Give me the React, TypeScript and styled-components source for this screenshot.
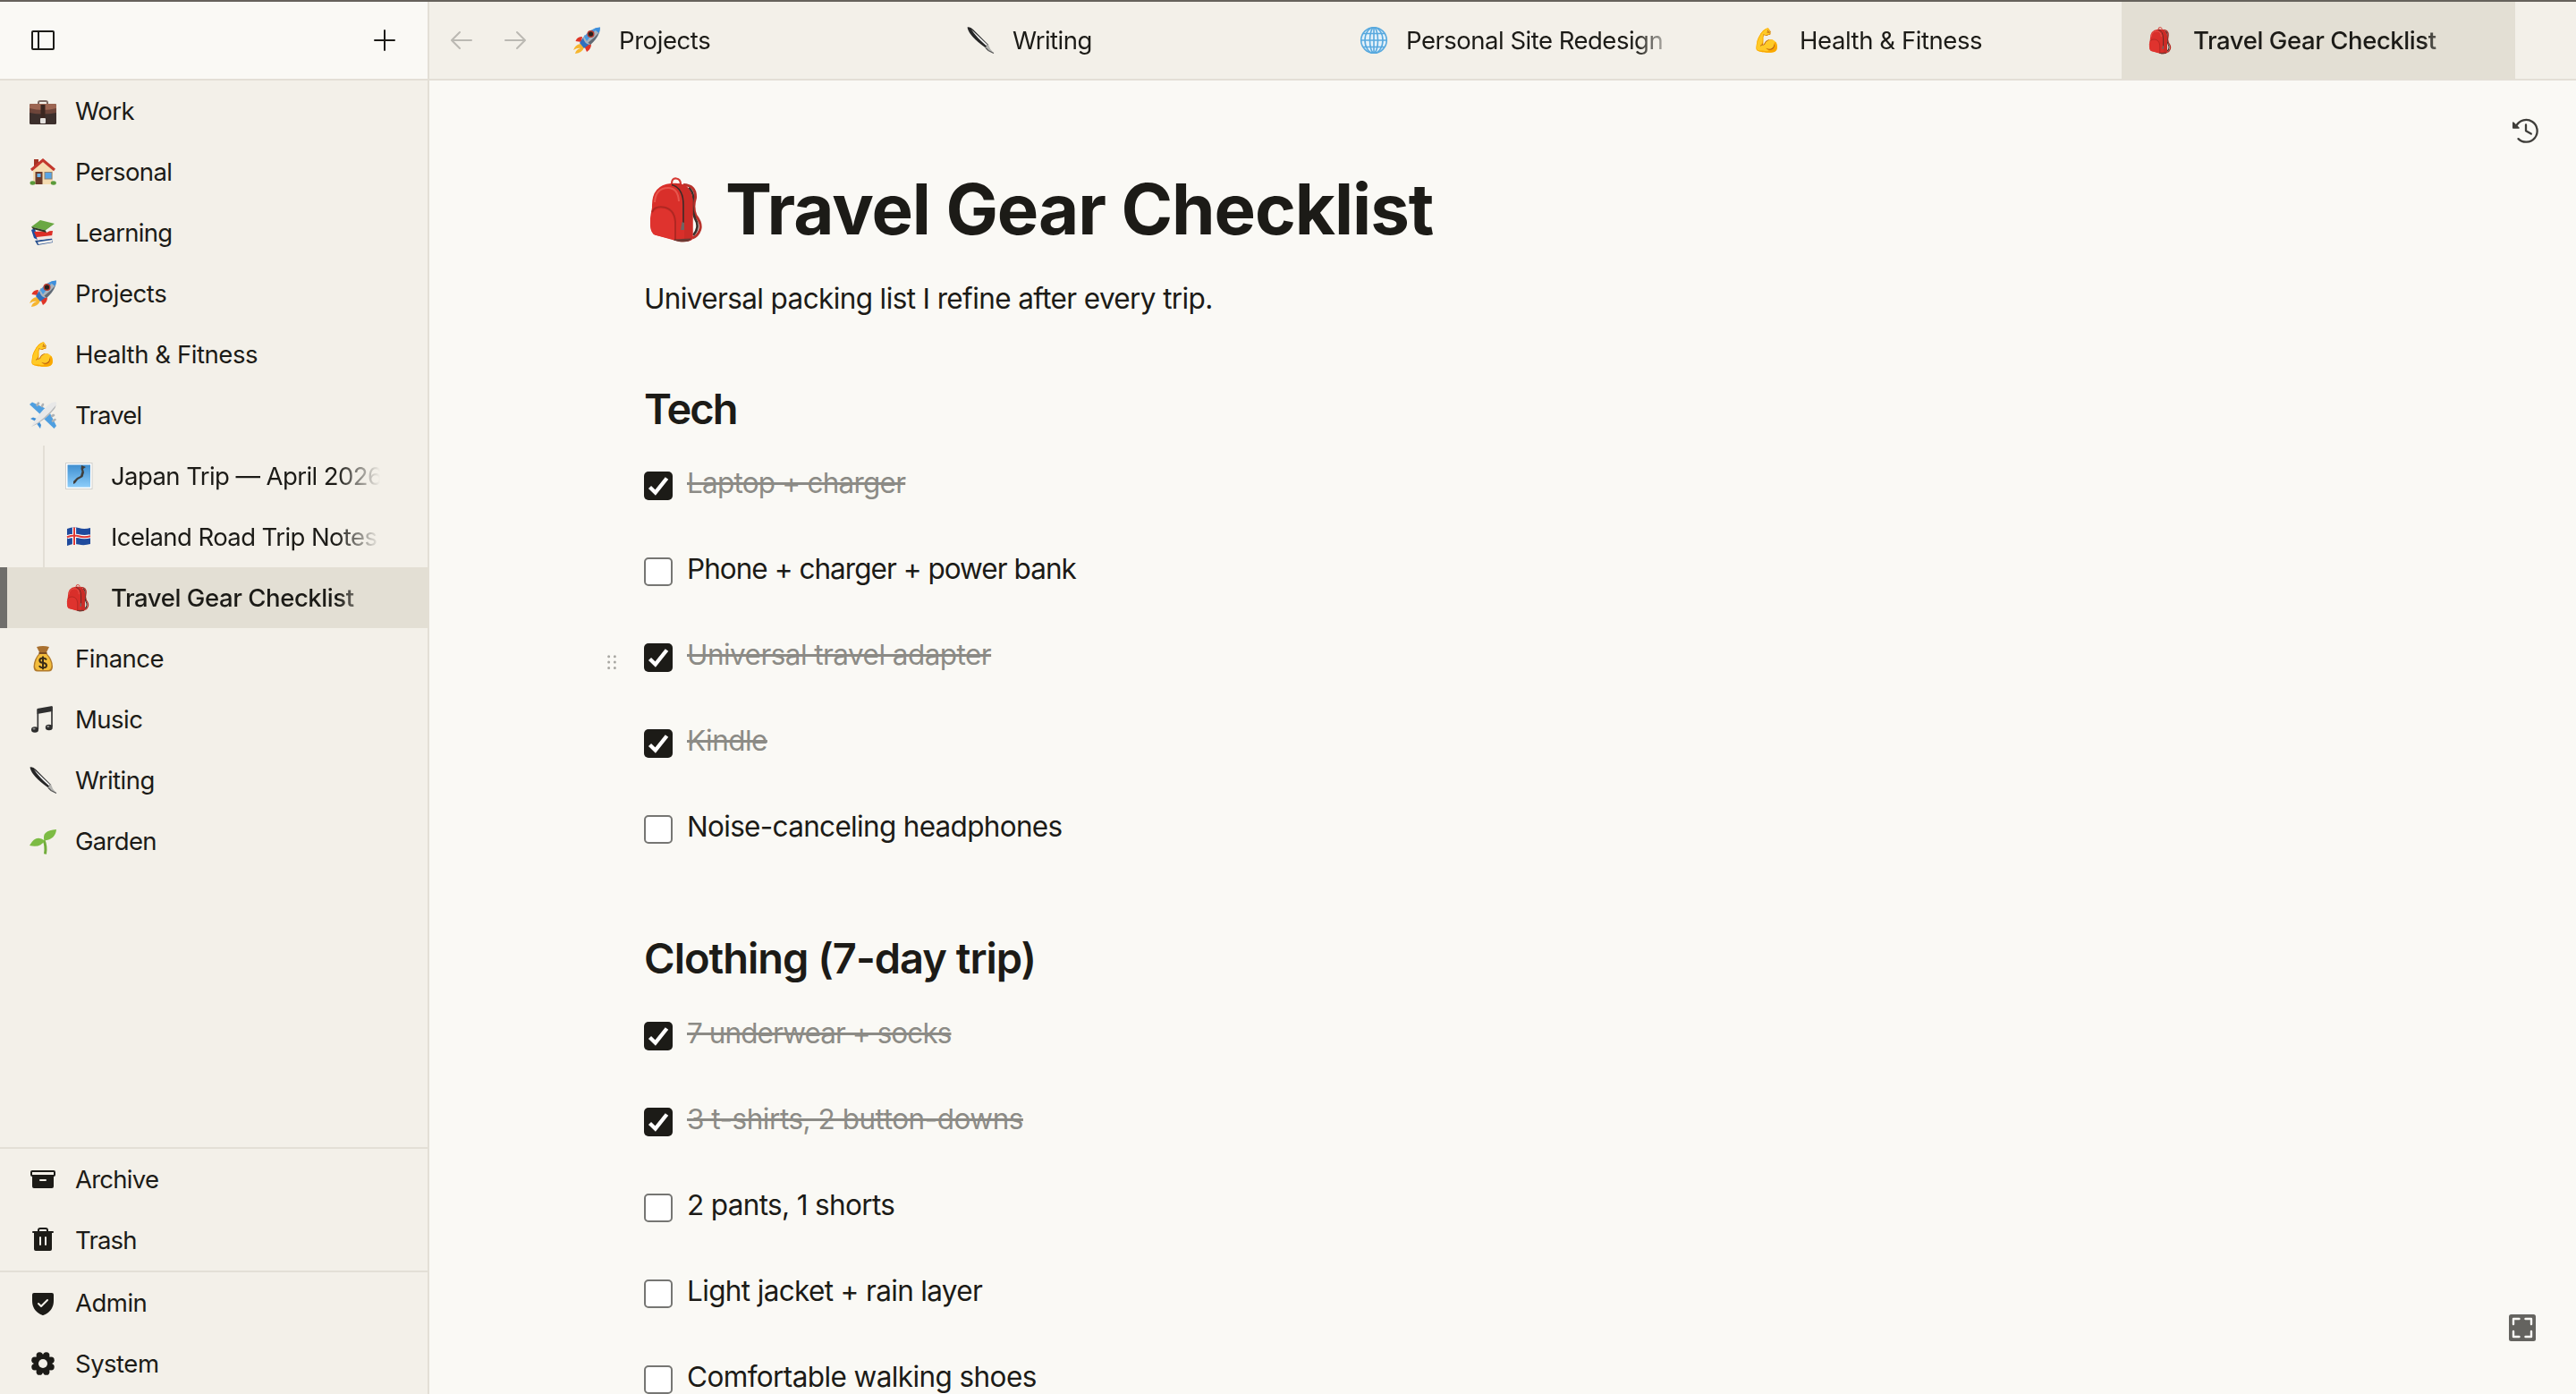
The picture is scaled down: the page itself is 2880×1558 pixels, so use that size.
import React from "react";
import styled, { createGlobalStyle, css } from "styled-components";
import {
  PiArchiveFill,
  PiArrowLeft,
  PiArrowRight,
  PiDotsSixVerticalBold,
  PiPlus,
  PiShieldCheckFill,
  PiSidebarSimple,
  PiTrashFill,
} from "react-icons/pi";

const color = {
  page: "#faf9f5",
  panel: "#f3f0e9",
  active: "#e3dfd4",
  line: "#e3dfd6",
  ink: "#1c1b17",
  done: "#8c8b86",
};

const GlobalStyle = createGlobalStyle`
  *, *::before, *::after { box-sizing: border-box; }
  html, body { margin: 0; padding: 0; height: 100%; overflow: hidden; }
  body {
    background: ${color.page};
    color: ${color.ink};
    font-family: Inter, "Liberation Sans", sans-serif;
    font-size: 27.5px;
  }
`;

/* ---------- layout ---------- */

const Shell = styled.div`
  display: grid;
  grid-template-columns: 480px 1fr;
  height: 1558px;
  width: 2880px;
  overflow: hidden;
  border-top: 2px solid #66625c;
`;

const Sidebar = styled.aside`
  display: flex;
  flex-direction: column;
  min-height: 0;
  background: ${color.panel};
  border-right: 2px solid ${color.line};
`;

const SidebarHeader = styled.div`
  display: flex;
  align-items: center;
  justify-content: space-between;
  flex: none;
  height: 88px;
  padding: 0 32px;
  background: ${color.page};
  border-bottom: 2px solid ${color.line};
`;

const IconButton = styled.button<{ $muted?: boolean }>`
  display: flex;
  padding: 0;
  border: 0;
  background: none;
  font-size: 32px;
  color: ${(p) => (p.$muted ? "#bbb9b3" : color.ink)};
`;

const Tree = styled.nav`
  display: flex;
  flex-direction: column;
  flex: 1;
`;

const NavRow = styled.a<{ $child?: boolean; $active?: boolean }>`
  display: flex;
  align-items: center;
  gap: 20px;
  height: 68px;
  flex: none;
  padding-left: ${(p) => (p.$child ? 72 : 32)}px;
  padding-right: 53px;
  ${(p) =>
    p.$child &&
    !p.$active &&
    css`
      background: linear-gradient(${color.line}, ${color.line}) 48px 0 / 2px 100% no-repeat;
    `}
  ${(p) =>
    p.$active &&
    css`
      margin-right: -2px;
      padding-left: 64px;
      padding-right: 55px;
      border-left: 8px solid #6f6e6b;
      background: ${color.active};
      font-weight: 500;
    `}
`;

const Label = styled.span<{ $track?: number; $fade?: boolean }>`
  flex: 1;
  min-width: 0;
  overflow: hidden;
  white-space: nowrap;
  line-height: 40px;
  letter-spacing: ${(p) => p.$track ?? -0.5}px;
  ${(p) =>
    p.$fade &&
    css`
      mask-image: linear-gradient(to right, #000 calc(100% - 48px), transparent);
    `}
`;

const Footer = styled.div`
  display: flex;
  flex-direction: column;
  border-top: 2px solid ${color.line};
`;

const Glyph = styled.span<{ $size?: number }>`
  display: flex;
  align-items: center;
  justify-content: center;
  flex: none;
  width: ${(p) => p.$size ?? 32}px;
  height: ${(p) => p.$size ?? 32}px;
  font-size: 32px;
  svg {
    display: block;
  }
`;

const EmojiText = styled.span`
  font-family: "Noto Color Emoji", sans-serif;
  font-size: 26px;
  font-weight: 400;
  line-height: 32px;
`;

const Workspace = styled.div`
  display: flex;
  flex-direction: column;
  min-width: 0;
  min-height: 0;
`;

const TabBar = styled.div`
  display: flex;
  flex: none;
  height: 88px;
  background: ${color.panel};
  border-bottom: 2px solid ${color.line};
`;

const History = styled.div`
  display: flex;
  align-items: center;
  gap: 28px;
  width: 132px;
  padding-left: 20px;
`;

const Tab = styled.div<{ $active?: boolean }>`
  display: flex;
  align-items: center;
  gap: 20px;
  flex: none;
  width: 440px;
  padding: 0 56px 0 28px;
  background: ${(p) => (p.$active ? color.active : "transparent")};
  font-weight: ${(p) => (p.$active ? 500 : 400)};
`;

const Page = styled.main`
  position: relative;
  flex: 1;
  min-height: 0;
  overflow: hidden;
  padding: 96px 240px 0;
`;

const PageAction = styled.button`
  position: absolute;
  display: flex;
  top: 40px;
  right: 41px;
  padding: 0;
  border: 0;
  background: none;
`;

const ExpandAction = styled.button`
  position: absolute;
  display: flex;
  right: 45px;
  bottom: 59px;
  padding: 0;
  border: 0;
  background: none;
`;

const TitleRow = styled.div`
  display: flex;
  align-items: center;
  gap: 15px;
  height: 96px;
`;

const Title = styled.h1`
  margin: 0;
  font-size: 78px;
  font-weight: 700;
  line-height: 96px;
  letter-spacing: -1.05px;
`;

const Lead = styled.p`
  margin: 28px 0 70px;
  font-size: 31.5px;
  line-height: 48px;
  letter-spacing: -0.62px;
`;

const Section = styled.section`
  margin-bottom: 47px;
`;

const Heading = styled.h2<{ $track: number }>`
  margin: 0 0 29.4px;
  font-size: 47px;
  font-weight: 600;
  line-height: 58px;
  letter-spacing: ${(p) => p.$track}px;
`;

const Item = styled.div`
  position: relative;
  display: flex;
  align-items: flex-start;
  gap: 16px;
  height: 96px;
`;

const Box = styled.span<{ $checked?: boolean }>`
  display: block;
  flex: none;
  width: 32px;
  height: 32px;
  margin-top: 12px;
  border-radius: 5px;
  border: ${(p) => (p.$checked ? "0" : "2px solid #767673")};
  background: ${(p) => (p.$checked ? color.ink : "#fff")};
`;

const ItemText = styled.span<{ $checked?: boolean; $track?: number }>`
  font-size: 31.5px;
  line-height: 50px;
  white-space: nowrap;
  letter-spacing: ${(p) => p.$track ?? -0.55}px;
  ${(p) =>
    p.$checked &&
    css`
      color: ${color.done};
      text-decoration: line-through;
      text-decoration-thickness: 3px;
    `}
`;

const DragHandle = styled.span`
  position: absolute;
  display: flex;
  left: -48px;
  top: 21px;
  font-size: 24px;
  color: #a9a8a3;
`;

/* ---------- pictograms ---------- */

const Briefcase = () => (
  <svg width="32" height="32" viewBox="0 0 32 32">
    <path d="M11 8V6.500Q11 5 13 5H19Q21 5 21 6.500V8" fill="none" stroke="#7d6a64" strokeWidth="2" />
    <rect x="1" y="8" width="30" height="23" rx="1.500" fill="#3c2f2c" />
    <path d="M2.500 8H29.500Q31 8 31 10V17Q16 20 1 17V10Q1 8 2.500 8Z" fill="#9c6552" />
    <path d="M1 13Q16 17 31 13V18Q16 21 1 18Z" fill="#6d453a" />
    <rect x="13.500" y="9" width="5" height="16" fill="#3b2620" />
    <rect x="13" y="24" width="6" height="6" rx="1" fill="#e4e1de" />
  </svg>
);

const House = () => (
  <svg width="32" height="32" viewBox="0 0 32 32">
    <rect x="6" y="2" width="5" height="9" fill="#a33325" />
    <path d="M5 14L16 4L27 14V30H5Z" fill="#f5dcb2" />
    <path d="M3 14L16 3L29 14" fill="none" stroke="#c3372d" strokeWidth="3" />
    <rect x="7.500" y="16" width="8" height="14" fill="#6b3a2a" />
    <rect x="9.500" y="18" width="4" height="4" fill="#6cb6ef" />
    <rect x="18" y="16.500" width="8" height="7.500" fill="#57a5e6" stroke="#8b8174" strokeWidth="1" />
    <ellipse cx="4.500" cy="28.500" rx="3" ry="2.200" fill="#5a9a3a" />
    <ellipse cx="27.800" cy="28.500" rx="3" ry="2.200" fill="#5a9a3a" />
  </svg>
);

const Books = () => (
  <svg width="32" height="32" viewBox="0 0 32 32">
    <path d="M7 25L26 22L27 27L10 30Z" fill="#27508f" />
    <path d="M10 26.500L26.500 24V26.500L11 29Z" fill="#f1efec" />
    <path d="M3 13L7 11L10 24L6 22Z" fill="#1c4da0" />
    <path d="M6 15L27 14L26 20L9 22Z" fill="#dd2e26" />
    <path d="M9 21L27 19V22.500L10 24.500Z" fill="#f3e6e2" />
    <path d="M3 9.500L13 2L29 6L19 13.500Z" fill="#6aa843" />
    <path d="M3 9.500L19 13.500L20 16L5 12Z" fill="#2d3a26" />
    <path d="M19 13.500L29 6.500V11L20 16Z" fill="#f0f0ee" />
  </svg>
);

const Rocket = () => (
  <svg width="32" height="32" viewBox="0 0 32 32">
    <path d="M9 20Q3 21 1 27Q6 24 9 25Q4 26 3 31Q11 30 13 24Z" fill="#f6b52f" />
    <path d="M11 12Q5 12 3.500 17L10 18Z" fill="#df3527" />
    <path d="M21 20Q21 26 16 29L13 22Z" fill="#df3527" />
    <path d="M8 19L14 10L22 18L13 25Z" fill="#2f6fbd" />
    <path d="M12 13Q20 2 31 1.500Q31 12 20 21Q13 20 12 13Z" fill="#a9b4be" />
    <path d="M13 12Q21 3 28 2L16 17Z" fill="#4a9ae0" />
    <path d="M31 1.500Q27 1.500 24 3.300L29.500 8Q31 5 31 1.500Z" fill="#3d8fdd" />
    <path d="M30 7Q27 15 20 21L17.500 18.500Q25 13 30 7Z" fill="#616a74" />
    <circle cx="20.500" cy="9" r="4" fill="#b53a30" />
    <circle cx="20.500" cy="9" r="2.600" fill="#26221f" />
  </svg>
);

const Plane = () => (
  <svg width="32" height="32" viewBox="0 0 32 32">
    <path d="M1 4L4 1.500L22 10L14 16Z" fill="#4f9fe0" />
    <path d="M31 28L28.500 31L17 20L23 12Z" fill="#4f9fe0" />
    <path d="M2 20L5 18.500L12 21L10 24Z" fill="#3f8fd6" />
    <path d="M13 31L14 27L10 20L8 24Z" fill="#3f8fd6" />
    <g stroke="#aeb2b6" strokeWidth="2.600" strokeLinecap="round">
      <path d="M11 2.500L9.500 5M16 4L15 6M29.500 21L27 22.500M28 16L26 17" />
    </g>
    <path d="M3 29Q9 16 22 4.500Q27 .500 31 1.500Q32 5 28 10Q17 23 3 29Z" fill="#e8e8e8" />
    <path d="M3 29Q18 20.500 30.500 5Q30 8 28 10Q17 23 3 29Z" fill="#b4b6b8" />
  </svg>
);

const JapanMap = () => (
  <svg width="32" height="32" viewBox="0 0 32 32">
    <defs>
      <linearGradient id="sea" x1="0" y1="0" x2="0" y2="1">
        <stop offset="0" stopColor="#3f8fd0" />
        <stop offset="1" stopColor="#8ccdfa" />
      </linearGradient>
    </defs>
    <rect x="1.500" y="1.500" width="29.500" height="29" fill="#fff" stroke="#d0d0cd" strokeWidth="1" />
    <rect x="3.500" y="3.500" width="25.500" height="25" fill="url(#sea)" />
    <path
      d="M19 4L24 6L21 8L22 12L20.500 17L15 20L12 24L10 25L10 22L14 18L18 16L19.500 11L18.500 8Z"
      fill="#403f3c"
    />
  </svg>
);

const Iceland = () => (
  <svg width="32" height="32" viewBox="0 0 32 32">
    <path d="M3 7Q10 4 16 6T29 6V24Q22 26 16 24.500T3 26Z" fill="#1f4a9d" />
    <path d="M11 5.500V25M3 16.300Q10 13.500 16 15.300T29 15.300" fill="none" stroke="#fff" strokeWidth="4.200" />
    <path d="M11 5.500V25M3 16.300Q10 13.500 16 15.300T29 15.300" fill="none" stroke="#df3a36" strokeWidth="2" />
  </svg>
);

const MoneyBag = () => (
  <svg width="32" height="32" viewBox="0 0 32 32">
    <path d="M9 3Q16 1 23 3L19.500 10H12.500Z" fill="#a9702f" />
    <path d="M12 10H20Q27 17 27 25Q27 30.500 22 30.500H10Q5.500 30.500 5.500 25Q6 16 12 10Z" fill="#b27a2c" />
    <path d="M12.500 11H19.500Q25 17 25.500 24Q25.500 29 21 29H11.500Q7 29 7 24Q8 16 12.500 11Z" fill="#f3bd3c" />
    <path d="M11.500 10H20.500" stroke="#7c4c20" strokeWidth="2" />
    <path
      d="M20 17.500Q19 15.500 16 15.500Q12.300 15.500 12.300 18Q12.300 20.500 16 20.800Q20 21.200 20 23.700Q20 26.300 16 26.300Q12.800 26.300 12 24M16 13.500V28.300"
      fill="none"
      stroke="#3a2c17"
      strokeWidth="2"
    />
  </svg>
);

const Notes = () => (
  <svg width="32" height="32" viewBox="0 0 32 32">
    <path d="M9.500 4L26.500 1V7L9.500 10Z" fill="#2f2f2f" />
    <path d="M10.300 5V27M26 2V24" stroke="#383838" strokeWidth="1.700" />
    <ellipse cx="7" cy="27.500" rx="4" ry="3.200" fill="#2d2d2d" />
    <ellipse cx="22.800" cy="25" rx="4" ry="3.200" fill="#2d2d2d" />
    <ellipse cx="6" cy="26.500" rx="1.600" ry="1" fill="#8d8d8d" />
    <ellipse cx="21.800" cy="24" rx="1.600" ry="1" fill="#8d8d8d" />
  </svg>
);

const Pen = () => (
  <svg width="32" height="32" viewBox="0 0 32 32">
    <path d="M1.500 1.500Q4.500 .500 8 4L25 21L22 24.500Q3 11 1.500 1.500Z" fill="#252525" />
    <path d="M6 4L24 21L22.800 22.300Q11 12 6 4Z" fill="#f3f3f3" />
    <path d="M21.500 24L25 20.500L27 25.500L31 30.500L25 27.500Z" fill="#b4b4b1" />
    <path d="M22 24.500L25 27.500L31 30.500" fill="none" stroke="#555" strokeWidth="1.200" />
  </svg>
);

const Sprout = () => (
  <svg width="32" height="32" viewBox="0 0 32 32">
    <path d="M17 15Q20 22 18.500 30.500" fill="none" stroke="#72ad3c" strokeWidth="3" />
    <path d="M17.500 15.500Q14 4 31 3Q30 14 17.500 15.500Z" fill="#7cbb43" />
    <path d="M18 15.500Q8 8 1 21Q13 24 18 15.500Z" fill="#7cbb43" />
  </svg>
);

const GlobeIcon = () => (
  <svg width="32" height="32" viewBox="0 0 32 32">
    <circle cx="16" cy="16" r="14.500" fill="#e3f1fa" />
    <g fill="none" stroke="#58a9de" strokeWidth="1.600">
      <circle cx="16" cy="16" r="14.300" />
      <ellipse cx="16" cy="16" rx="10" ry="14.300" />
      <ellipse cx="16" cy="16" rx="4.500" ry="14.300" />
      <path d="M16 1.700V30.300M1.700 16H30.300M4 8.500H28M4 23.500H28" />
    </g>
  </svg>
);

const Backpack = ({ size = 32 }: { size?: number }) => (
  <svg width={size} height={size} viewBox="0 0 76 76">
    <path
      d="M44 10.500Q58 11 57.500 25Q54 36 58 45Q65 54 62.500 61Q60 68 54 70"
      fill="none"
      stroke="#b8322b"
      strokeWidth="3"
    />
    <path d="M50 14Q57 20 54 30Q53.500 40 57 48Q63 58 55 67" fill="none" stroke="#3a302b" strokeWidth="2.600" />
    <path d="M31 9Q31 3 36 3.500Q41 4 41 10" fill="none" stroke="#d63a33" strokeWidth="2.200" />
    <path
      d="M9 36Q8 11 30 9Q52 6 54.500 27L54.500 70Q52 75.500 39 74L12 66.500Q7 64 7 53Q7 44 9 36Z"
      fill="#d92f2a"
    />
    <path d="M30 9.500Q45 12 45 32V73Q54 74 54.500 70V27Q52 6 30 9.500Z" fill="#cb2c27" />
    <path d="M12 30Q13 14 27 14Q38 14 39 29" fill="none" stroke="#e8564d" strokeWidth="2" />
    <path d="M31 10.500Q44 14 44 33V55" fill="none" stroke="#3b2a27" strokeWidth="1.600" />
    <path d="M42.500 52L45 53L45 61L41 61Z" fill="#6f6561" />
    <path d="M7 48Q9 38 20 37Q33 38 34 53V72L12 66.500Q7 64 7 53Z" fill="#df332e" />
    <path d="M9 41Q12 34.500 21 35.500Q34 37 35 52V72" fill="none" stroke="#b02722" strokeWidth="2" />
    <path d="M34 71.500L53 70.500Q51 75.500 39 74L33 72.500Z" fill="#6b3a33" />
  </svg>
);

const lobes = [0, 1, 2, 3, 4, 5, 6, 7].map((k) => {
  const a = ((22.5 + 45 * k) * Math.PI) / 180;
  return [16 + 9.9 * Math.cos(a), 16 + 9.9 * Math.sin(a)];
});

const Cog = () => (
  <svg width="32" height="32" viewBox="0 0 32 32">
    <g fill={color.ink}>
      {lobes.map(([x, y]) => (
        <circle key={`${x}-${y}`} cx={x} cy={y} r="3.600" />
      ))}
      <circle cx="16" cy="16" r="10.500" />
    </g>
    <circle cx="16" cy="16" r="5" fill={color.panel} />
  </svg>
);

const Rewind = () => (
  <svg width="32" height="32" viewBox="0 0 32 32" fill="none" stroke="#3f3e3a" strokeLinecap="round" strokeLinejoin="round">
    <path d="M6.300 10.500A12.400 12.400 0 1 1 8.500 25.100" strokeWidth="2.300" />
    <path d="M17 9.500V16.300L22.800 19.600" strokeWidth="2.300" />
    <path d="M2.800 7V13H9Z" fill="#3f3e3a" strokeWidth="1.600" />
  </svg>
);

const Check = () => (
  <svg width="32" height="32" viewBox="0 0 32 32">
    <path d="M6.500 17.500L12.700 23.500L25.500 7.500" fill="none" stroke="#fff" strokeWidth="4.400" />
  </svg>
);

const Expand = () => (
  <svg width="30" height="30" viewBox="0 0 30 30">
    <rect width="30" height="30" rx="2.500" fill="#64635f" />
    <path
      d="M5 11V5H11.500M18.500 5H25V11M25 19V25H18.500M11.500 25H5V19"
      fill="none"
      stroke="#faf9f5"
      strokeWidth="2.400"
      strokeLinecap="round"
      strokeLinejoin="round"
    />
  </svg>
);

/* ---------- data ---------- */

type Entry = {
  icon: React.ReactNode;
  text: string;
  track?: number;
  child?: boolean;
  active?: boolean;
};

const flex = <EmojiText>💪</EmojiText>;

const tree: Entry[] = [
  { icon: <Briefcase />, text: "Work" },
  { icon: <House />, text: "Personal", track: -0.6 },
  { icon: <Books />, text: "Learning", track: -0.7 },
  { icon: <Rocket />, text: "Projects", track: -0.42 },
  { icon: flex, text: "Health & Fitness", track: -0.42 },
  { icon: <Plane />, text: "Travel", track: -0.8 },
  { icon: <JapanMap />, text: "Japan Trip — April 2026", track: -0.58, child: true },
  { icon: <Iceland />, text: "Iceland Road Trip Notes", track: -0.58, child: true },
  { icon: <Backpack />, text: "Travel Gear Checklist", track: -0.42, child: true, active: true },
  { icon: <MoneyBag />, text: "Finance" },
  { icon: <Notes />, text: "Music" },
  { icon: <Pen />, text: "Writing" },
  { icon: <Sprout />, text: "Garden", track: -0.7 },
];

const storage: Entry[] = [
  { icon: <PiArchiveFill />, text: "Archive", track: -0.75 },
  { icon: <PiTrashFill />, text: "Trash", track: -0.8 },
];

const settings: Entry[] = [
  { icon: <PiShieldCheckFill />, text: "Admin" },
  { icon: <Cog />, text: "System" },
];

const tabs: Entry[] = [
  { icon: <Rocket />, text: "Projects", track: -0.42 },
  { icon: <Pen />, text: "Writing" },
  { icon: <GlobeIcon />, text: "Personal Site Redesign" },
  { icon: flex, text: "Health & Fitness", track: -0.42 },
  { icon: <Backpack />, text: "Travel Gear Checklist", track: -0.42, active: true },
];

type Todo = { text: string; done?: boolean; track?: number; handle?: boolean };

const sections: { title: string; track: number; items: Todo[] }[] = [
  {
    title: "Tech",
    track: -1.9,
    items: [
      { text: "Laptop + charger", done: true, track: -0.78 },
      { text: "Phone + charger + power bank", track: -0.97 },
      { text: "Universal travel adapter", done: true, handle: true },
      { text: "Kindle", done: true },
      { text: "Noise-canceling headphones", track: -0.69 },
    ],
  },
  {
    title: "Clothing (7-day trip)",
    track: -1,
    items: [
      { text: "7 underwear + socks", done: true, track: -0.93 },
      { text: "3 t-shirts, 2 button-downs", done: true, track: -0.48 },
      { text: "2 pants, 1 shorts", track: -0.65 },
      { text: "Light jacket + rain layer", track: -0.65 },
      { text: "Comfortable walking shoes", track: -0.6 },
    ],
  },
];

const Rows = ({ entries }: { entries: Entry[] }) => (
  <>
    {entries.map((e) => (
      <NavRow key={e.text} $child={e.child} $active={e.active}>
        <Glyph>{e.icon}</Glyph>
        <Label $track={e.track} $fade={e.child}>
          {e.text}
        </Label>
      </NavRow>
    ))}
  </>
);

export default function App() {
  return (
    <>
      <GlobalStyle />
      <Shell>
        <Sidebar>
          <SidebarHeader>
            <IconButton aria-label="Toggle sidebar">
              <PiSidebarSimple />
            </IconButton>
            <IconButton aria-label="New page">
              <PiPlus />
            </IconButton>
          </SidebarHeader>
          <Tree>
            <Rows entries={tree} />
          </Tree>
          <Footer>
            <Rows entries={storage} />
          </Footer>
          <Footer>
            <Rows entries={settings} />
          </Footer>
        </Sidebar>
        <Workspace>
          <TabBar>
            <History>
              <IconButton $muted aria-label="Back">
                <PiArrowLeft />
              </IconButton>
              <IconButton $muted aria-label="Forward">
                <PiArrowRight />
              </IconButton>
            </History>
            {tabs.map((t) => (
              <Tab key={t.text} $active={t.active}>
                <Glyph>{t.icon}</Glyph>
                <Label $track={t.track} $fade>
                  {t.text}
                </Label>
              </Tab>
            ))}
          </TabBar>
          <Page>
            <TitleRow>
              <Glyph $size={76}>
                <Backpack size={76} />
              </Glyph>
              <Title>Travel Gear Checklist</Title>
            </TitleRow>
            <Lead>Universal packing list I refine after every trip.</Lead>
            {sections.map((s) => (
              <Section key={s.title}>
                <Heading $track={s.track}>{s.title}</Heading>
                {s.items.map((i) => (
                  <Item key={i.text}>
                    {i.handle && (
                      <DragHandle>
                        <PiDotsSixVerticalBold />
                      </DragHandle>
                    )}
                    <Box $checked={i.done}>{i.done && <Check />}</Box>
                    <ItemText $checked={i.done} $track={i.track}>
                      {i.text}
                    </ItemText>
                  </Item>
                ))}
              </Section>
            ))}
            <PageAction aria-label="History">
              <Rewind />
            </PageAction>
            <ExpandAction aria-label="Expand">
              <Expand />
            </ExpandAction>
          </Page>
        </Workspace>
      </Shell>
    </>
  );
}
